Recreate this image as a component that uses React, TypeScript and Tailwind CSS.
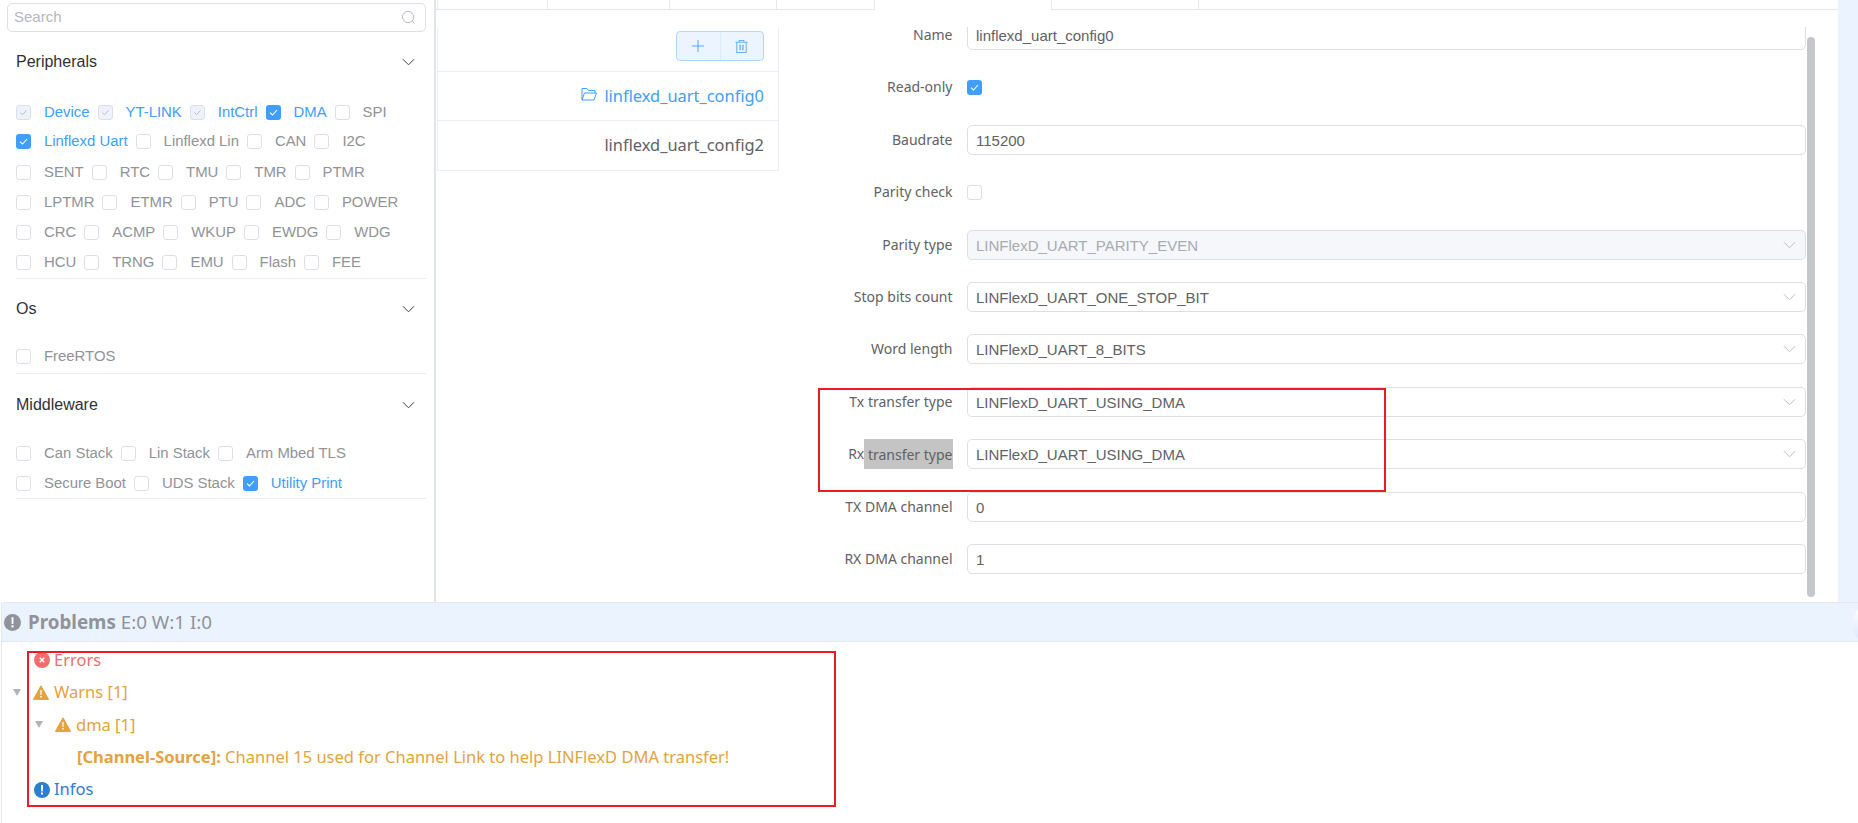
import { ReactNode } from "react";

type Item = { label: string; state?: "on" | "locked" };

const peripherals: Item[][] = [
  [
    { label: "Device", state: "locked" },
    { label: "YT-LINK", state: "locked" },
    { label: "IntCtrl", state: "locked" },
    { label: "DMA", state: "on" },
    { label: "SPI" },
  ],
  [{ label: "Linflexd Uart", state: "on" }, { label: "Linflexd Lin" }, { label: "CAN" }, { label: "I2C" }],
  [{ label: "SENT" }, { label: "RTC" }, { label: "TMU" }, { label: "TMR" }, { label: "PTMR" }],
  [{ label: "LPTMR" }, { label: "ETMR" }, { label: "PTU" }, { label: "ADC" }, { label: "POWER" }],
  [{ label: "CRC" }, { label: "ACMP" }, { label: "WKUP" }, { label: "EWDG" }, { label: "WDG" }],
  [{ label: "HCU" }, { label: "TRNG" }, { label: "EMU" }, { label: "Flash" }, { label: "FEE" }],
];

const middleware: Item[][] = [
  [{ label: "Can Stack" }, { label: "Lin Stack" }, { label: "Arm Mbed TLS" }],
  [{ label: "Secure Boot" }, { label: "UDS Stack" }, { label: "Utility Print", state: "on" }],
];

function Tick({ color }: { color: string }) {
  return (
    <svg viewBox="0 0 15 15" className="h-full w-full" fill="none" stroke={color} strokeWidth="1.1">
      <path d="M4 7.6 6.5 10 11 5" />
    </svg>
  );
}

function Checkbox({ state }: { state?: "on" | "locked" }) {
  if (state === "on") {
    return (
      <span className="block h-[15px] w-[15px] shrink-0 rounded-[3px] bg-[#409eff]">
        <Tick color="#ffffff" />
      </span>
    );
  }
  if (state === "locked") {
    return (
      <span className="block h-[15px] w-[15px] shrink-0 rounded-[3px] border border-[#dcdfe6] bg-[#edf2fc]">
        <Tick color="#b4b8c0" />
      </span>
    );
  }
  return <span className="block h-[15px] w-[15px] shrink-0 rounded-[3px] border border-[#dcdfe6] bg-white" />;
}

function CheckRow({ items, className }: { items: Item[]; className: string }) {
  return (
    <div className={`flex items-center gap-[8px] ${className}`}>
      {items.map((item) => (
        <label key={item.label} className="flex items-center gap-[13px]">
          <Checkbox state={item.state} />
          <span className={`text-[14.9px] leading-none ${item.state ? "text-[#409eff]" : "text-[#909399]"}`}>
            {item.label}
          </span>
        </label>
      ))}
    </div>
  );
}

function Chevron({ className }: { className: string }) {
  return (
    <svg viewBox="0 0 14 8" className={className} fill="none" stroke="currentColor" strokeWidth="1">
      <path d="M1 1l6 6 6-6" />
    </svg>
  );
}

function SectionTitle({ title, className }: { title: string; className: string }) {
  return (
    <div className={`flex items-center justify-between pr-[11px] ${className}`}>
      <span className="text-[16px] leading-none text-[#303133]">{title}</span>
      <Chevron className="h-[8px] w-[13px] text-[#303133]" />
    </div>
  );
}

function Sidebar() {
  return (
    <aside className="w-[436px] shrink-0 border-r-2 border-[#e2e4ec] pl-[7px] pr-[8px] pt-[3px]">
      <div className="flex h-[29px] items-center justify-between rounded-[5px] border border-[#dcdfe6] pl-[6px] pr-[9px]">
        <span className="text-[15px] text-[#b4b8c0]">Search</span>
        <svg viewBox="0 0 16 16" className="h-[15px] w-[15px]" fill="none" stroke="#b4b8c0" strokeWidth="1">
          <circle cx="7.5" cy="7.5" r="6" />
          <path d="M12 12l2.5 2.5" />
        </svg>
      </div>
      <div className="ml-[9px]">
        <SectionTitle title="Peripherals" className="mt-[22px]" />
        <CheckRow items={peripherals[0]} className="mt-[34.5px]" />
        <CheckRow items={peripherals[1]} className="mt-[14.5px]" />
        <CheckRow items={peripherals[2]} className="mt-[16px]" />
        <CheckRow items={peripherals[3]} className="mt-[15px]" />
        <CheckRow items={peripherals[4]} className="mt-[15px]" />
        <CheckRow items={peripherals[5]} className="mt-[15px]" />
        <div className="mt-[8px] border-b border-[#ebeef5]" />
        <SectionTitle title="Os" className="mt-[22px]" />
        <CheckRow items={[{ label: "FreeRTOS" }]} className="mt-[32px]" />
        <div className="mt-[9px] border-b border-[#ebeef5]" />
        <SectionTitle title="Middleware" className="mt-[23px]" />
        <CheckRow items={middleware[0]} className="mt-[33px]" />
        <CheckRow items={middleware[1]} className="mt-[15px]" />
        <div className="mt-[7px] border-b border-[#ebeef5]" />
      </div>
    </aside>
  );
}

function Tabs() {
  return (
    <div className="flex h-[10px] shrink-0 border-b border-[#e4e7ed] pl-[1px]">
      <div className="w-[111px] border-x border-[#e4e7ed]" />
      <div className="w-[122px] border-r border-[#e4e7ed]" />
      <div className="w-[107px] border-r border-[#e4e7ed]" />
      <div className="w-[98px] border-r border-[#e4e7ed]" />
      <div className="-mb-px w-[177px] border-r border-[#e4e7ed] bg-white" />
      <div className="w-[147px] border-r border-[#e4e7ed]" />
    </div>
  );
}

function ConfigList() {
  return (
    <div className="ml-[1px] h-[143px] w-[342px] shrink-0 border-x border-b border-[#ebeef5] font-['Noto_Sans',sans-serif]">
      <div className="flex h-[44px] items-start justify-end border-b border-[#ebeef5] pr-[14px] pt-[3px]">
        <div className="flex h-[30px] w-[88px] rounded-[4px] border border-[#b3d8ff] bg-[#ecf5ff] text-[#409eff]">
          <span className="flex flex-1 items-center justify-center border-r border-[#d9ecff]">
            <svg viewBox="0 0 16 16" className="h-[14px] w-[14px]" fill="none" stroke="currentColor" strokeWidth="1">
              <path d="M8 1v14M1 8h14" />
            </svg>
          </span>
          <span className="flex flex-1 items-center justify-center">
            <svg viewBox="0 0 16 16" className="h-[15px] w-[15px]" fill="none" stroke="#66b1ff" strokeWidth="1.1">
              <path d="M1.5 3.5h13M5.5 3.5V1.5h5v2M3 3.5V14.5h10V3.5" />
              <path d="M6.5 6v6M9.5 6v6" strokeWidth="1.5" />
            </svg>
          </span>
        </div>
      </div>
      <div className="flex h-[49px] items-center justify-end gap-[7px] border-b border-[#ebeef5] pr-[14px]">
        <svg viewBox="0 0 16 14" className="mb-[4px] h-[14px] w-[16px]" fill="none" stroke="#409eff" strokeWidth="1">
          <path d="M1 13V1.5h5l1.5 2H14V6M1 13l2.5-7H15.5L13 13H1Z" />
        </svg>
        <span className="text-[16.4px] text-[#409eff]">linflexd_uart_config0</span>
      </div>
      <div className="flex h-[49px] items-center justify-end pr-[14px]">
        <span className="text-[16.4px] text-[#606266]">linflexd_uart_config2</span>
      </div>
    </div>
  );
}

function Field({ label, children }: { label: ReactNode; children: ReactNode }) {
  return (
    <div className="flex h-[30px] items-center">
      <div className="w-[173.5px] shrink-0 text-right font-['Noto_Sans',sans-serif] text-[14px] leading-none text-[#606266]">
        {label}
      </div>
      <div className="ml-[14.5px] flex-1">{children}</div>
    </div>
  );
}

function TextBox({ value, select, disabled }: { value: string; select?: boolean; disabled?: boolean }) {
  return (
    <div
      className={`flex h-[30px] items-center justify-between rounded-[5px] border border-[#dcdfe6] pl-[8px] pr-[9px] text-[15px] leading-none ${
        disabled ? "bg-[#f5f7fa] text-[#a8abb2]" : "bg-white text-[#606266]"
      }`}
    >
      <span className="pt-[1px]">{value}</span>
      {select && <Chevron className="h-[8px] w-[13px] text-[#b4b8c0]" />}
    </div>
  );
}

function ConfigForm() {
  return (
    <div className="-mt-[1px] h-[575px] w-[1027px] shrink-0 overflow-hidden">
      <div className="-mt-[7px] flex flex-col gap-[22.4px]">
        <Field label="Name">
          <TextBox value="linflexd_uart_config0" />
        </Field>
        <Field label="Read-only">
          <Checkbox state="on" />
        </Field>
        <Field label="Baudrate">
          <TextBox value="115200" />
        </Field>
        <Field label="Parity check">
          <Checkbox />
        </Field>
        <Field label="Parity type">
          <TextBox value="LINFlexD_UART_PARITY_EVEN" select disabled />
        </Field>
        <Field label="Stop bits count">
          <TextBox value="LINFlexD_UART_ONE_STOP_BIT" select />
        </Field>
        <Field label="Word length">
          <TextBox value="LINFlexD_UART_8_BITS" select />
        </Field>
        <Field label="Tx transfer type">
          <TextBox value="LINFlexD_UART_USING_DMA" select />
        </Field>
        <Field
          label={
            <span>
              Rx<span className="bg-[#c4c4c4] py-[5.5px]"> transfer type</span>
            </span>
          }
        >
          <TextBox value="LINFlexD_UART_USING_DMA" select />
        </Field>
        <Field label="TX DMA channel">
          <TextBox value="0" />
        </Field>
        <Field label="RX DMA channel">
          <TextBox value="1" />
        </Field>
      </div>
    </div>
  );
}

function ProblemIcon({ kind, className }: { kind: "error" | "warn" | "info" | "muted"; className: string }) {
  if (kind === "warn") {
    return (
      <svg viewBox="0 0 16 15" className={className}>
        <path d="M8 .8 15.6 14.4H.4Z" fill="#e6a23c" stroke="#e6a23c" strokeLinejoin="round" />
        <path d="M7.2 5h1.6l-.3 5h-1ZM7.2 11h1.6v1.6H7.2Z" fill="#fff" />
      </svg>
    );
  }
  const fill = kind === "error" ? "#f56c6c" : kind === "info" ? "#2d7dd2" : "#909399";
  return (
    <svg viewBox="0 0 16 16" className={className}>
      <circle cx="8" cy="8" r="8" fill={fill} />
      {kind === "error" ? (
        <path d="M5.8 5.8l4.4 4.4M10.2 5.8l-4.4 4.4" stroke="#fff" strokeWidth="1.4" />
      ) : (
        <path d="M7 3h2l-.2 6.4H7.2ZM7 10.6h2v2H7Z" fill="#fff" />
      )}
    </svg>
  );
}

function Caret() {
  return <span className="block h-0 w-0 border-x-[4.5px] border-t-[7px] border-x-transparent border-t-[#b0b3b8]" />;
}

function ProblemRow({ children }: { children: ReactNode }) {
  return <div className="flex h-[32.4px] items-center text-[16.5px]">{children}</div>;
}

function Problems() {
  return (
    <section className="ml-px flex-1 border-l border-[#e4e7ed] font-['Noto_Sans',sans-serif]">
      <div className="relative flex h-[40px] items-center gap-[7px] overflow-hidden rounded-tl-[4px] border-y border-[#e4e7ed] bg-[#ebf3fe] pl-[2px] text-[18.8px] text-[#909399]">
        <ProblemIcon kind="muted" className="h-[17px] w-[17px]" />
        <span>
          <b>Problems</b> E:0 W:1 I:0
        </span>
        <span className="absolute -right-[25px] top-[3px] h-[36px] w-[30px] rounded-full bg-gradient-to-b from-white to-[#dbe7fd]" />
      </div>
      <div className="pt-[2px]">
        <ProblemRow>
          <ProblemIcon kind="error" className="ml-[32px] h-[16px] w-[16px]" />
          <span className="ml-[4px] text-[#f56c6c]">Errors</span>
        </ProblemRow>
        <ProblemRow>
          <span className="ml-[11px] mr-[12px]">
            <Caret />
          </span>
          <ProblemIcon kind="warn" className="h-[15px] w-[16px]" />
          <span className="ml-[5px] text-[#e6a23c]">Warns [1]</span>
        </ProblemRow>
        <ProblemRow>
          <span className="ml-[33px] mr-[12px]">
            <Caret />
          </span>
          <ProblemIcon kind="warn" className="h-[15px] w-[16px]" />
          <span className="ml-[5px] text-[#e6a23c]">dma [1]</span>
        </ProblemRow>
        <ProblemRow>
          <span className="ml-[75px] text-[#e6a23c]">
            <b>[Channel-Source]:</b> Channel 15 used for Channel Link to help LINFlexD DMA transfer!
          </span>
        </ProblemRow>
        <ProblemRow>
          <ProblemIcon kind="info" className="ml-[32px] h-[16px] w-[16px]" />
          <span className="ml-[4px] text-[#2d7dd2]">Infos</span>
        </ProblemRow>
      </div>
    </section>
  );
}

export default function App() {
  return (
    <div className="relative flex h-[823px] w-[1858px] flex-col overflow-hidden bg-white font-['Liberation_Sans',Arial,sans-serif]">
      <div className="flex h-[602px] shrink-0">
        <Sidebar />
        <main className="relative flex-1">
          <Tabs />
          <div className="flex pt-[18px]">
            <ConfigList />
            <ConfigForm />
          </div>
          {/* scrollbar thumb */}
          <div className="absolute left-[1371px] top-[37px] h-[560px] w-[8px] rounded-full bg-[#c6c7cb]" />
        </main>
        <div className="w-[20px] shrink-0 bg-[#ebf3fe]" />
      </div>
      <Problems />
      {/* red review annotations drawn on top of the screenshot */}
      <div className="absolute left-[818px] top-[388px] h-[104px] w-[568px] border-2 border-[#ed1c24]" />
      <div className="absolute left-[27px] top-[651px] h-[156px] w-[809px] border-2 border-[#ed1c24]" />
    </div>
  );
}
